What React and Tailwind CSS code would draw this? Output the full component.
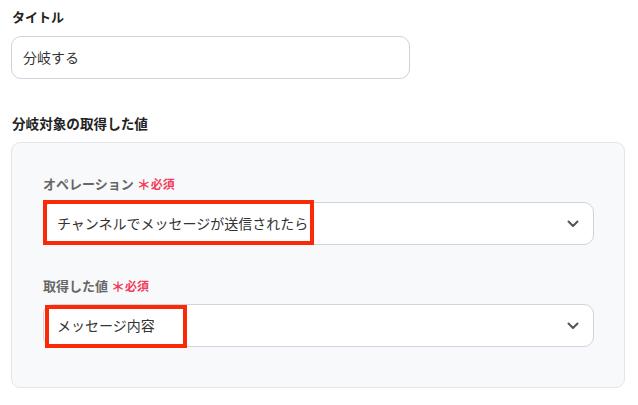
import React from "react";

const font = { fontFamily: '"Noto Sans CJK JP", "Noto Sans", sans-serif' };

function Chevron() {
  return (
    <svg width="12" height="8" viewBox="0 0 12 8" fill="none">
      <path d="M1.5 1.5 L6 6 L10.5 1.5" stroke="#555" strokeWidth="2" strokeLinecap="round" strokeLinejoin="round" />
    </svg>
  );
}

function Select({ value, boxClass }) {
  return (
    <div className="relative">
      <div className="h-[43px] w-[551px] bg-white border border-[#cfd4dc] rounded-[10px] flex items-center justify-between pl-[13px] pr-[14px]">
        <span className="text-[14px] text-[#333]">{value}</span>
        <Chevron />
      </div>
      <div className={"absolute border-[4px] border-[#fa2a08] " + boxClass} />
    </div>
  );
}

export default function App() {
  return (
    <div style={font} className="w-[638px] h-[405px] bg-white pl-[11px] pt-[8px] flex flex-col">
      <div className="text-[13px] font-bold text-[#222] leading-[18px] pl-[1px]">タイトル</div>
      <div className="mt-[10px] h-[43px] w-[399px] border border-[#cfd4dc] rounded-[10px] flex items-center pl-[11px] text-[14px] text-[#333]">
        分岐する
      </div>
      <div className="mt-[35px] text-[13.6px] font-bold text-[#222] leading-[18px] pl-[1px]">分岐対象の取得した値</div>
      <div className="mt-[10px] w-[614px] h-[246px] bg-[#f8f9fa] border border-[#e3e5e8] rounded-[9px] px-[31px] pt-[32px]">
        <div className="text-[13px] font-bold text-[#666] leading-[18px] flex items-center">
          オペレーション
          <span className="text-[#f23c5a] ml-[3px] text-[14px]">＊</span>
          <span className="text-[#f23c5a] text-[12px]">必須</span>
        </div>
        <div className="mt-[9px]">
          <Select value="チャンネルでメッセージが送信されたら" boxClass="left-0 top-[-2px] w-[271px] h-[45px]" />
        </div>
        <div className="mt-[32px] text-[13px] font-bold text-[#666] leading-[18px] flex items-center">
          取得した値
          <span className="text-[#f23c5a] ml-[3px] text-[14px]">＊</span>
          <span className="text-[#f23c5a] text-[12px]">必須</span>
        </div>
        <div className="mt-[9px]">
          <Select value="メッセージ内容" boxClass="left-[2px] top-[1px] w-[142px] h-[43px]" />
        </div>
      </div>
    </div>
  );
}
